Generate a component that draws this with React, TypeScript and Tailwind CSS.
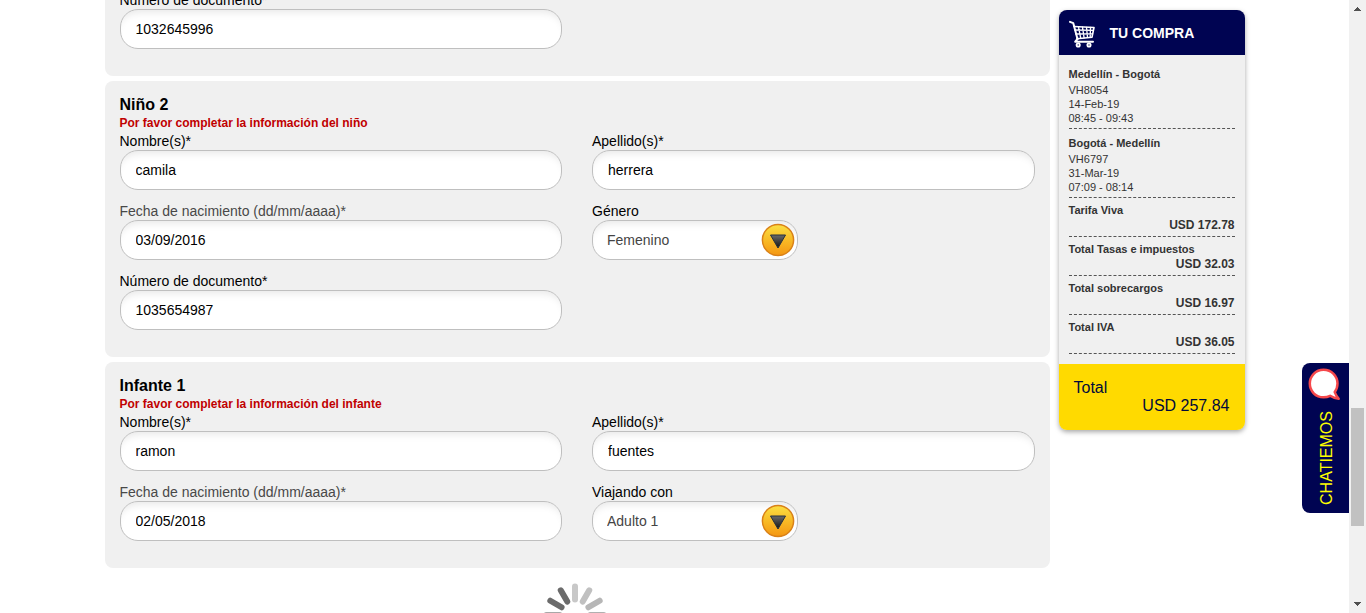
import { useId, type ReactNode } from 'react';

type FieldProps = { label: string; value: string; muted?: boolean };

const controlClass =
  'block h-10 rounded-[18px] border border-[#bfbfbf] bg-white text-sm shadow-[inset_0_8px_8px_-6px_rgba(0,0,0,0.10)] outline-none';

function TextField({ label, value, muted }: FieldProps) {
  const id = useId();
  return (
    <div>
      <label htmlFor={id} className={`block pt-px text-sm leading-[18px] ${muted ? 'text-[#484848]' : 'text-black'}`}>
        {label}
      </label>
      <input id={id} type="text" defaultValue={value} className={`${controlClass} w-full px-[15px] text-black`} />
    </div>
  );
}

function SelectField({ label, value, options }: FieldProps & { options: string[] }) {
  const id = useId();
  return (
    <div>
      <label htmlFor={id} className="block pt-px text-sm leading-[18px] text-black">
        {label}
      </label>
      <div className="relative w-[206px]">
        <select
          id={id}
          defaultValue={value}
          className={`${controlClass} w-full appearance-none pl-3.5 pr-10 text-[#444]`}
        >
          {options.map((o) => (
            <option key={o}>{o}</option>
          ))}
        </select>
        <svg className="pointer-events-none absolute right-[3px] top-[3px]" width="34" height="34" viewBox="0 0 34 34" aria-hidden="true">
          <defs>
            <linearGradient id={`${id}-g`} x1="0" y1="0" x2="0" y2="1">
              <stop offset="0" stopColor="#fbdf42" />
              <stop offset="0.55" stopColor="#f8b724" />
              <stop offset="1" stopColor="#f49612" />
            </linearGradient>
            <linearGradient id={`${id}-t`} x1="0" y1="0" x2="0" y2="1">
              <stop offset="0" stopColor="#6a6a6a" />
              <stop offset="1" stopColor="#111" />
            </linearGradient>
          </defs>
          <circle cx="17" cy="17" r="15.6" fill={`url(#${id}-g)`} stroke="#d98118" strokeWidth="1.5" />
          <path d="M9.5 12h15L17 25z" fill={`url(#${id}-t)`} stroke="#26303c" strokeWidth="1" />
        </svg>
      </div>
    </div>
  );
}

function Passenger({ title, error, children }: { title: string; error: string; children: ReactNode }) {
  return (
    <section className="rounded-lg bg-[#f0f0f0] px-[15px] pb-[27px] pt-3.5">
      <h2 className="text-base font-bold leading-5 text-black">{title}</h2>
      <p className="text-xs font-bold leading-4 text-[#c00000]">{error}</p>
      <div className="grid grid-cols-2 gap-x-[30px] gap-y-[11px]">{children}</div>
    </section>
  );
}

function Flight({ route, lines }: { route: string; lines: string[] }) {
  return (
    <div className="border-b border-dashed border-[#555] pb-[3px] pt-1.5 text-[11px] leading-[14px]">
      <h3 className="font-bold leading-[17px]">{route}</h3>
      {lines.map((l) => (
        <p key={l}>{l}</p>
      ))}
    </div>
  );
}

function Charge({ name, amount }: { name: string; amount: string }) {
  return (
    <div className="border-b border-dashed border-[#555] pb-1 pt-[5px] font-bold">
      <dt className="text-[11px] leading-[14px]">{name}</dt>
      <dd className="pt-px text-right text-xs leading-[14px]">{amount}</dd>
    </div>
  );
}

function CartIcon() {
  return (
    <svg width="26" height="31" viewBox="0 0 26 31" fill="none" stroke="#fff" strokeLinecap="round" strokeLinejoin="round" aria-hidden="true">
      <path d="M1 4.800l3.300 1.400L8.500 22" strokeWidth="2" />
      <path d="M5 9.500l20 1-2 9.700-15 1.500" strokeWidth="1.600" />
      <path d="M5.800 13l18.600.4M6.800 17l16.800-.2M9.500 10l2.200 11M13.500 10.200l1.600 10.600M17.500 10.400l1 10M21.500 10.400l-.3 9.800" strokeWidth="1.300" />
      <path d="M8.500 22l-2.300 2.700h17.800" strokeWidth="2" />
      <circle cx="9.200" cy="28" r="1.600" strokeWidth="1.900" />
      <circle cx="20" cy="28" r="1.600" strokeWidth="1.900" />
    </svg>
  );
}

const spokes = [
  { angle: -90, color: '#a8a8a8' },
  { angle: -60, color: '#6b6b6b' },
  { angle: -30, color: '#6b6b6b' },
  { angle: 0, color: '#c8c8c8' },
  { angle: 30, color: '#c0c0c0' },
  { angle: 60, color: '#b6b6b6' },
  { angle: 90, color: '#b0b0b0' },
  { angle: 120, color: '#a8a8a8' },
  { angle: 150, color: '#a0a0a0' },
  { angle: 180, color: '#989898' },
  { angle: 210, color: '#909090' },
  { angle: 240, color: '#888888' },
];

function Spinner() {
  return (
    <svg width="68" height="68" viewBox="-34 -34 68 68" className="shrink-0" role="img" aria-label="Cargando">
      {spokes.map((s) => (
        <line key={s.angle} x1="0" y1="-15.500" x2="0" y2="-28.500" stroke={s.color} strokeWidth="6" strokeLinecap="round" transform={`rotate(${s.angle})`} />
      ))}
    </svg>
  );
}

export default function App() {
  return (
    <div className="flex h-screen overflow-hidden bg-white font-['Liberation_Sans',Arial,sans-serif]">
      <div className="min-w-0 flex-1 overflow-hidden">
        <div className="mx-auto flex max-w-[1140px] items-start gap-[9px]">
          <main className="-mt-2.5 flex min-w-0 flex-1 flex-col gap-[5px]">
            <section className="rounded-b-lg bg-[#f0f0f0] px-[15px] pb-[27px]">
              <div className="grid grid-cols-2 gap-x-[30px]">
                <TextField label="Número de documento*" value="1032645996" />
              </div>
            </section>
            <Passenger title="Niño 2" error="Por favor completar la información del niño">
              <TextField label="Nombre(s)*" value="camila" />
              <TextField label="Apellido(s)*" value="herrera" />
              <TextField label="Fecha de nacimiento (dd/mm/aaaa)*" value="03/09/2016" muted />
              <SelectField label="Género" value="Femenino" options={['Femenino', 'Masculino']} />
              <TextField label="Número de documento*" value="1035654987" />
            </Passenger>
            <Passenger title="Infante 1" error="Por favor completar la información del infante">
              <TextField label="Nombre(s)*" value="ramon" />
              <TextField label="Apellido(s)*" value="fuentes" />
              <TextField label="Fecha de nacimiento (dd/mm/aaaa)*" value="02/05/2018" muted />
              <SelectField label="Viajando con" value="Adulto 1" options={['Adulto 1', 'Adulto 2']} />
            </Passenger>
            <div className="flex justify-center pr-1 pt-2">
              <Spinner />
            </div>
          </main>
          <aside className="mt-2.5 w-[186px] shrink-0 overflow-hidden rounded-lg bg-[#f0f0f0] text-[#333] shadow-[0_2px_5px_rgba(0,0,0,0.35)]">
            <header className="flex h-[45px] items-center gap-[15px] bg-[#000452] px-2.5 text-white">
              <CartIcon />
              <h2 className="text-sm font-bold leading-5">TU COMPRA</h2>
            </header>
            <div className="px-2.5 pb-2.5 pt-[5px]">
              <Flight route="Medellín - Bogotá" lines={['VH8054', '14-Feb-19', '08:45 - 09:43']} />
              <Flight route="Bogotá - Medellín" lines={['VH6797', '31-Mar-19', '07:09 - 08:14']} />
              <dl>
                <Charge name="Tarifa Viva" amount="USD 172.78" />
                <Charge name="Total Tasas e impuestos" amount="USD 32.03" />
                <Charge name="Total sobrecargos" amount="USD 16.97" />
                <Charge name="Total IVA" amount="USD 36.05" />
              </dl>
            </div>
            <div className="bg-[#ffda00] p-[15px] text-base leading-[18px] text-[#000a3c]">
              <p>Total</p>
              <p className="text-right">USD 257.84</p>
            </div>
          </aside>
        </div>
      </div>

      <button
        type="button"
        className="fixed right-[17px] top-[363px] flex h-[150px] w-[47px] flex-col items-center justify-between rounded-l-lg bg-[#000452] pb-2 pt-1"
      >
        <svg width="34" height="34" viewBox="0 0 34 34" className="-ml-1" aria-hidden="true">
          <path
            d="M16.500 2.800C24.600 2.800 30.500 9 30.500 16.600c0 3.400-1 6.200-2.800 8.500.9 2.400 2.200 4.500 4 6.700-3.400-.4-6.200-1.400-8.600-3-2 1-4.200 1.500-6.600 1.500C8.700 30.300 2.800 24.200 2.800 16.600S8.700 2.800 16.500 2.800z"
            fill="#fff"
            stroke="#f5484b"
            strokeWidth="2.500"
            strokeLinejoin="round"
          />
        </svg>
        <span className="rotate-180 pr-0.5 font-['Liberation_Sans_Narrow','Liberation_Sans',sans-serif] text-base leading-7 text-[#ffff00] [writing-mode:vertical-rl]">
          CHATIEMOS
        </span>
      </button>

      <div className="flex w-[17px] shrink-0 flex-col items-center bg-[#f1f1f1]" aria-hidden="true">
        <svg width="17" height="17" viewBox="0 0 17 17" shapeRendering="crispEdges">
          <path d="M5 11h7L8.500 7z" fill="#505050" />
        </svg>
        <div className="flex w-full flex-1 flex-col items-center">
          <div className="grow-[391]" />
          <div className="w-[13px] grow-[118] bg-[#c1c1c1]" />
          <div className="grow-[70]" />
        </div>
        <svg width="17" height="17" viewBox="0 0 17 17" shapeRendering="crispEdges">
          <path d="M5 6h7l-3.500 4z" fill="#505050" />
        </svg>
      </div>
    </div>
  );
}
